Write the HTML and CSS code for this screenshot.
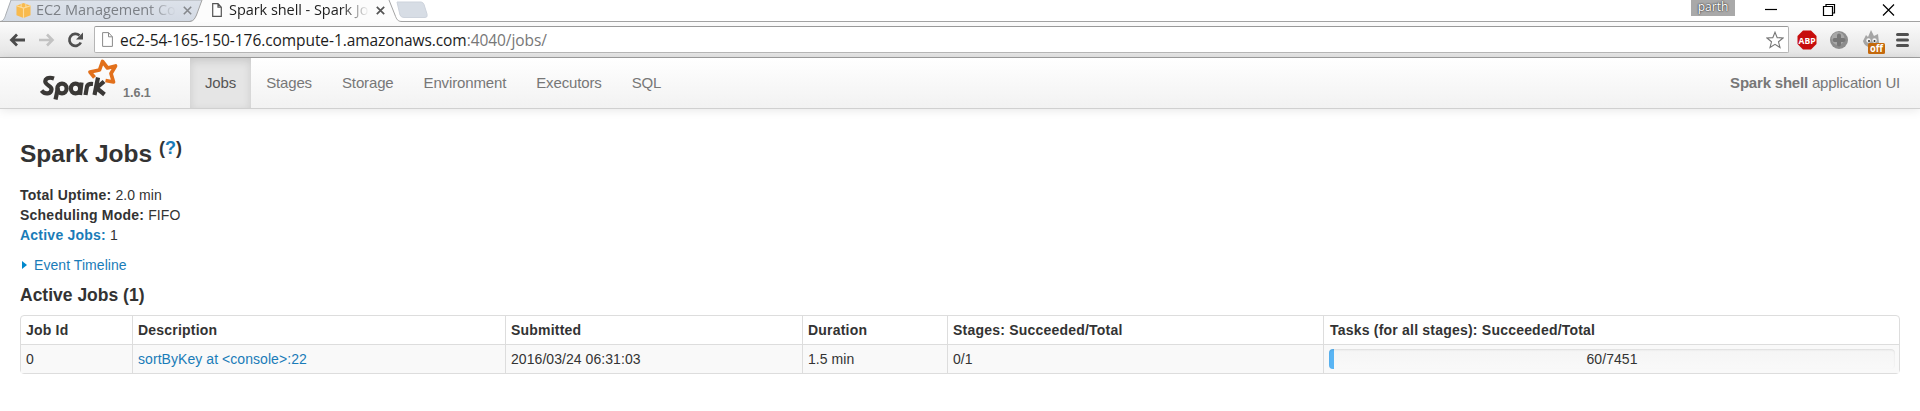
FILE: index.html
```html
<!DOCTYPE html>
<html lang="en">
<head>
<meta charset="utf-8">
<title>Spark shell - Spark Jobs</title>
<link rel="stylesheet" href="styles.css">
</head>
<body>
<header class="browser">
  <div class="tabstrip">
    <svg class="tab-shapes" width="440" height="22" viewBox="0 0 440 22">
      <defs><linearGradient id="tb" x1="0" x2="0" y1="0" y2="1"><stop offset="0" stop-color="#dde2ea"/><stop offset="1" stop-color="#d3dae4"/></linearGradient></defs>
      <path d="M0 21.500C4 21 5 17 6 14L11 0H204L196 17Q194 21.500 189 21.500Z" fill="url(#tb)" stroke="#a9adb2"/>
      <path d="M189 22C194 21.500 195 18 196.500 15L202 0H389L395 15C396.500 19 397.500 21.500 402 21.500V22Z" fill="#fcfcfc"/>
      <path d="M0 21.500H190C194 21 195 18 196.500 15L202 0M389 0L395 15C396.500 19 397.500 21.500 402 21.500H440" fill="none" stroke="#a2a2a2"/>
      <path d="M397 2H421Q423 2 424 4.500L427 14Q428 17.500 425 17.500H404Q401 17.500 400 15Z" fill="#d7dde5" stroke="#cdd3dc"/>
    </svg>
    <div class="tab tab-ec2">
      <svg width="15" height="15" viewBox="0 0 15 16"><path d="M0 3L7.500 0 15 3V13L7.500 16 0 13Z" fill="#f8ba4d"/><path d="M0 3L7.500 5.500 15 3M5 1V4.500M10 1V4.500M7.500 5.500V16" fill="none" stroke="#fddc9c" stroke-width="1.200"/></svg>
      <span class="tab-title">EC2 Management Co</span>
      <svg class="x" width="9" height="9" viewBox="0 0 9 9"><path d="M.8.8L8.200 8.200M8.200.8L.8 8.200" stroke="#85888c" stroke-width="1.600"/></svg>
    </div>
    <div class="tab tab-spark">
      <svg width="10" height="14" viewBox="0 0 10 14"><path d="M.7.700H6L9.300 4.200V13.300H.7ZM6 .7V4.200H9.300" fill="#fff" stroke="#555" stroke-width="1.200"/></svg>
      <span class="tab-title">Spark shell - Spark Jo</span>
      <svg class="x" width="9" height="9" viewBox="0 0 9 9"><path d="M.8.8L8.200 8.200M8.200.8L.8 8.200" stroke="#555" stroke-width="1.700"/></svg>
    </div>
    <div class="window-controls">
      <span class="user">parth</span>
      <svg width="130" height="16" viewBox="0 0 130 16" fill="none" stroke="#000" stroke-width="1.200"><path d="M0 9.500H12"/><path d="M58.500 6.500H67.500V15.500H58.500ZM61 6V4.500H69.500V13H68"/><path d="M118 4.500L129 15.500M129 4.500L118 15.500"/></svg>
    </div>
  </div>
  <div class="toolbar">
    <svg class="nav-icons" width="84" height="18" viewBox="0 0 84 18">
      <path d="M16 9H3M8 3.500L2.500 9 8 14.500" fill="none" stroke="#4b4b4b" stroke-width="2.800"/>
      <path d="M30 9H43M38 3.500L43.500 9 38 14.500" fill="none" stroke="#c2c2c2" stroke-width="2.600"/>
      <path d="M70.500 4.500A6 6 0 1 0 71.800 11.500" fill="none" stroke="#4f4f4f" stroke-width="2.700"/><path d="M74 1.500V8.500H67Z" fill="#4f4f4f"/>
    </svg>
    <div class="omnibox">
      <svg width="11" height="15" viewBox="0 0 11 15"><path d="M.6.600H6.500L10.400 4.800V14.400H.6ZM6.500.6V4.800H10.400" fill="#fff" stroke="#8a8a8a"/></svg>
      <span class="url">ec2-54-165-150-176.compute-1.amazonaws.com<span class="path">:4040/jobs/</span></span>
      <svg class="star" width="18" height="18" viewBox="0 0 18 18"><path d="M9 1.200L11.200 6.600 17 7 12.500 10.800 14 16.500 9 13.400 4 16.500 5.500 10.800 1 7 6.800 6.600Z" fill="#fff" stroke="#777" stroke-width="1.100"/></svg>
    </div>
    <svg class="extensions" width="116" height="28" viewBox="0 0 116 28">
      <path d="M6 4.500H14L19.500 10V18L14 23.500H6L.500 18V10Z" fill="#c70d0c"/>
      <text x="10" y="17.500" class="abp" textLength="17" lengthAdjust="spacingAndGlyphs">ABP</text>
      <circle cx="42" cy="14" r="9" fill="#8d8d8d"/><circle cx="41" cy="12.500" r="6.500" fill="#a8a8a8"/><path d="M42 9.500V18.500M37.500 14H46.500" stroke="#777" stroke-width="4" stroke-linecap="round"/>
      <path d="M66 15L69 9 71 11 74 4 77 10 81 8 82 17C82 23 68 24 66 15Z" fill="#a5a5a5"/><circle cx="71.500" cy="14.500" r="2.200" fill="#f4f4f4"/><circle cx="77.500" cy="14.500" r="2.200" fill="#f4f4f4"/><circle cx="72" cy="15" r="1" fill="#333"/><circle cx="77.500" cy="15" r="1" fill="#333"/>
      <rect x="71" y="17" width="17" height="11" rx="1.500" fill="#c4690c"/><text x="79.500" y="26.300" class="off" textLength="13" lengthAdjust="spacingAndGlyphs">off</text>
      <path d="M100.500 8.500H110.500M100.500 14H110.500M100.500 19.500H110.500" stroke="#505050" stroke-width="3" stroke-linecap="round"/>
    </svg>
  </div>
</header>
<nav class="navbar">
  <div class="brand">
    <svg width="80" height="43" viewBox="0 0 80 43" fill="none">
      <path d="M54.500 19.500L50 14 59.500 12 62.500 3.500 67.500 10 75.500 8 71 15.500 73.500 24 65.500 22.500" stroke="#e2701b" stroke-width="3.700" stroke-linejoin="round"/>
      <g stroke="#3a3836" stroke-width="4.200" stroke-linejoin="round">
        <path d="M14 20.500C8 18.500 4.500 21 5.500 24.500C7 28 12 28 11.500 31.500C11 36 5 37 1.500 32.500"/>
        <path d="M15.500 41.500L18 30"/><ellipse cx="22" cy="30.500" rx="4.600" ry="4.900"/>
        <ellipse cx="35.500" cy="30.500" rx="4.600" ry="4.900"/><path d="M41.500 24.500L40 37"/>
        <path d="M45.500 37L47 28.500Q48 25.500 53 26"/>
        <path d="M58 19.500L54.500 37M64 23.500L56.500 30 64.500 36.500"/>
      </g>
    </svg>
    <span class="version">1.6.1</span>
  </div>
  <ul class="menu">
    <li class="active">Jobs</li><li>Stages</li><li>Storage</li><li>Environment</li><li>Executors</li><li>SQL</li>
  </ul>
  <p class="app-name"><strong>Spark shell</strong> application UI</p>
</nav>
<main class="content">
  <h3>Spark Jobs <sup>(<a>?</a>)</sup></h3>
  <ul class="summary">
    <li><strong>Total Uptime:</strong> 2.0 min</li>
    <li><strong>Scheduling Mode:</strong> FIFO</li>
    <li><a><strong>Active Jobs:</strong></a> 1</li>
  </ul>
  <div class="timeline"><span class="arrow"></span><a>Event Timeline</a></div>
  <h4>Active Jobs (1)</h4>
  <table class="jobs">
    <colgroup><col class="c1"><col class="c2"><col class="c3"><col class="c4"><col class="c5"><col></colgroup>
    <thead><tr><th>Job Id</th><th>Description</th><th>Submitted</th><th>Duration</th><th>Stages: Succeeded/Total</th><th>Tasks (for all stages): Succeeded/Total</th></tr></thead>
    <tbody><tr><td>0</td><td><a>sortByKey at &lt;console&gt;:22</a></td><td>2016/03/24 06:31:03</td><td>1.5 min</td><td>0/1</td>
      <td class="progress-cell"><div class="progress"><span>60/7451</span></div></td></tr></tbody>
  </table>
</main>
</body>
</html>
```

FILE: styles.css
```css
* { box-sizing: border-box; }
body { margin: 0; height: 411px; overflow: hidden; background: #fff; color: #333; font: 14px/20px "Liberation Sans", Arial, sans-serif; }
ul, p, h3, h4 { margin: 0; padding: 0; }
ul { list-style: none; }
a { color: #1a7cb8; }
svg { flex: none; display: block; }

.browser { height: 58px; font-family: "Open Sans", "Noto Sans", sans-serif; }
.tabstrip { position: relative; height: 22px; display: flex; border-bottom: 1px solid #a2a2a2; }
.tab-shapes { position: absolute; left: 0; top: 0; }
.tab { position: relative; display: flex; align-items: center; height: 20px; font-size: 14.5px; white-space: nowrap; }
.tab-ec2 { margin-left: 16px; width: 176px; color: #7b7f85; }
.tab-spark { margin-left: 20px; width: 173px; color: #222; }
.tab-title { margin-left: 5px; width: 140px; overflow: hidden; letter-spacing: -0.05px; -webkit-mask-image: linear-gradient(90deg, #000 80%, transparent); mask-image: linear-gradient(90deg, #000 80%, transparent); }
.tab-spark .tab-title { margin-left: 7px; }
.x { margin-left: auto; }
.window-controls { margin-left: auto; display: flex; padding-right: 25px; }
.user { width: 44px; height: 16px; margin-right: 30px; background: #a9a9a9; color: #fff; font-size: 12px; line-height: 13px; text-align: center; text-shadow: 0 0 2px #222, 0 0 1px #444; }
.toolbar { height: 36px; display: flex; align-items: center; background: linear-gradient(#fbfbfb, #e4e4e4); border-bottom: 1px solid #a0a0a0; }
.nav-icons { margin-left: 9px; }
.omnibox { width: 1695px; height: 27px; margin-left: 1px; padding: 0 4px 0 7px; display: flex; align-items: center; background: #fff; border: 1px solid #b5b5b5; border-top-color: #999; border-radius: 2px; }
.url { margin-left: 7px; color: #1c1c1c; font-size: 15.5px; letter-spacing: -0.07px; white-space: nowrap; }
.path { color: #777; }
.star { margin-left: auto; }
.extensions { margin-left: 8px; }
.abp, .off { fill: #fff; font-size: 9px; font-weight: 700; text-anchor: middle; }
.off { font-size: 11px; }

.navbar { height: 51px; display: flex; background: linear-gradient(#fff, #f2f2f2); border-bottom: 1px solid #d0d0d0; box-shadow: 0 1px 10px rgba(0,0,0,.1); color: #777; font-size: 15px; letter-spacing: -0.14px; }
.brand { width: 150px; margin-left: 40px; display: flex; }
.version { margin: 25px 0 0 3px; font-size: 12.500px; font-weight: 700; letter-spacing: 0; }
.menu { display: flex; }
.menu li { height: 50px; padding: 15px 15px; }
.menu .active { background: #e5e5e5; box-shadow: inset 0 3px 8px rgba(0,0,0,.125); color: #555; }
.app-name { margin: 15px 20px 0 auto; letter-spacing: -0.2px; }

.content { padding: 25px 20px 0; }
h3 { height: 40px; line-height: 40px; font-size: 24.500px; font-weight: 700; }
sup { position: relative; top: -8px; font-size: 18px; line-height: 0; vertical-align: baseline; }
.summary { margin-top: 11px; }
.summary li { letter-spacing: 0.08px; }
.summary strong { letter-spacing: 0.23px; }
.timeline { display: flex; align-items: center; margin-top: 10px; letter-spacing: 0.06px; }
.arrow { margin: 0 7px 0 2px; border: 4px solid transparent; border-left: 5px solid #08c; border-right: 0; }
h4 { margin: 10px 0; font-size: 17.500px; line-height: 20px; font-weight: 700; }
.jobs { width: 1880px; table-layout: fixed; border-spacing: 0; border: 1px solid #ddd; border-radius: 4px; }
.c1 { width: 111px; } .c2 { width: 373px; } .c3 { width: 297px; } .c4 { width: 145px; } .c5 { width: 376px; }
.jobs th, .jobs td { padding: 4px 5px; text-align: left; border-left: 1px solid #ddd; }
.jobs th { height: 28px; letter-spacing: 0.21px; }
.jobs td { height: 29px; letter-spacing: 0.06px; border-top: 1px solid #ddd; background: #f9f9f9; }
.jobs th:first-child, .jobs td:first-child { border-left: 0; }
.jobs th:last-child { padding-left: 6px; }
.jobs .progress-cell { padding: 4px 4px 4px 5px; }
.progress { height: 20px; border-radius: 4px; text-align: center; background: linear-gradient(90deg, #5ab5f4 5px, transparent 5px), linear-gradient(#f5f5f5, #f9f9f9); box-shadow: inset 0 1px 2px rgba(0,0,0,.1); }
```
